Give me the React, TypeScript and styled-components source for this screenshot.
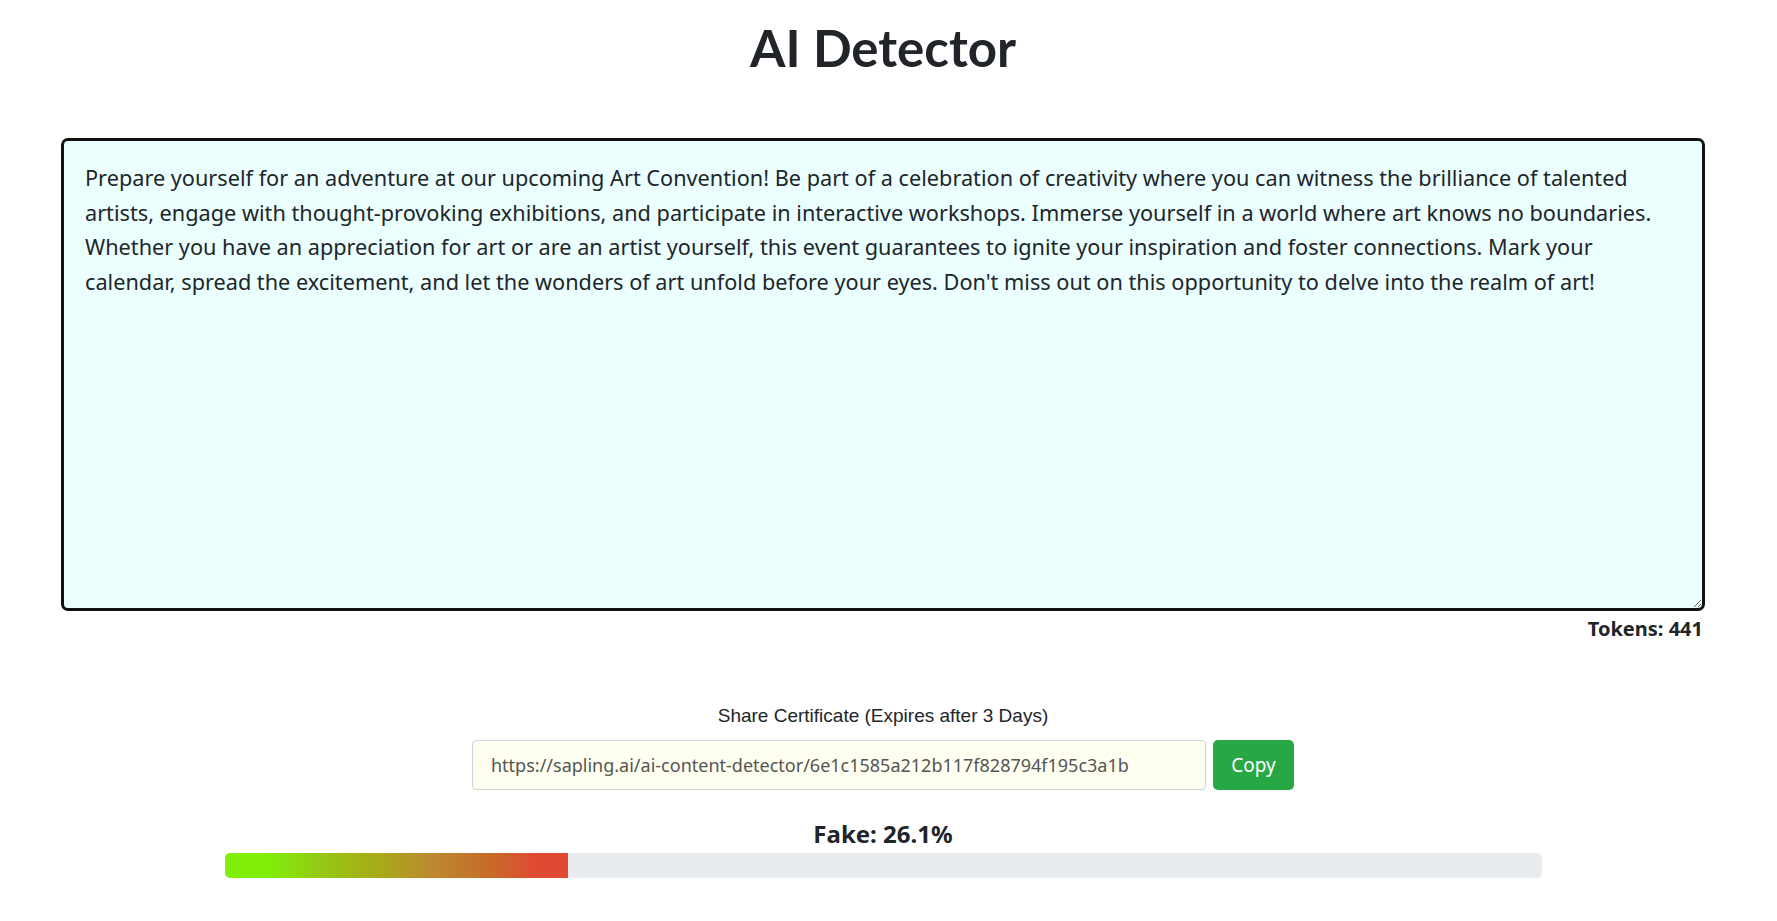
import styled, { createGlobalStyle } from 'styled-components'

const GlobalStyle = createGlobalStyle`
  html, body {
    margin: 0;
    padding: 0;
    background: #ffffff;
    color: #212529;
    font-family: "Noto Sans", "Open Sans", sans-serif;
  }
`

const Page = styled.div`
  display: flex;
  flex-direction: column;
  align-items: center;
  padding: 17px 72px 40px 61px;
`

const Title = styled.h1`
  margin: 0 0 60px;
  font-family: Lato, "Noto Sans", sans-serif;
  font-weight: 700;
  font-size: 51px;
  line-height: 1.2;
  color: #212529;
`

const EditorBlock = styled.div`
  width: 100%;
  display: flex;
  flex-direction: column;
  align-items: flex-end;
`

const TextBox = styled.textarea`
  box-sizing: border-box;
  width: 100%;
  height: 473px;
  padding: 20px 21px;
  border: 3px solid #111;
  border-radius: 7px;
  background: #ebffff;
  color: #212529;
  font-family: "Noto Sans", "Open Sans", sans-serif;
  font-size: 21.7px;
  line-height: 34.6px;
  outline: none;
`

const Tokens = styled.div`
  margin: 6px 2px 0 0;
  font-weight: 700;
  font-size: 20px;
  line-height: 24px;
`

const ShareSection = styled.section`
  margin-top: 64px;
  display: flex;
  flex-direction: column;
  align-items: center;
  gap: 13px;
`

const ShareLabel = styled.div`
  font-family: "Liberation Sans", Arial, sans-serif;
  font-size: 19px;
  line-height: 22px;
`

const ShareRow = styled.div`
  display: flex;
  gap: 7px;
`

const UrlInput = styled.input`
  box-sizing: border-box;
  width: 734px;
  height: 50px;
  padding: 0 18px;
  border: 1px solid #cfd4d8;
  border-radius: 4px;
  background: #fefff0;
  color: #555;
  font-family: "Noto Sans", "Open Sans", sans-serif;
  font-size: 18px;
  outline: none;
`

const CopyButton = styled.button`
  box-sizing: border-box;
  width: 81px;
  height: 50px;
  border: none;
  border-radius: 5px;
  background: #28a745;
  color: #fff;
  font-family: "Noto Sans", "Open Sans", sans-serif;
  font-size: 19px;
  cursor: pointer;
`

const Result = styled.section`
  margin-top: 29px;
  display: flex;
  flex-direction: column;
  align-items: center;
  gap: 4px;
`

const Score = styled.div`
  font-weight: 700;
  font-size: 24px;
  line-height: 30px;
`

const Track = styled.div`
  width: 1317px;
  height: 25px;
  border-radius: 5px;
  background: #e9ecef;
  overflow: hidden;
`

const Fill = styled.div`
  height: 100%;
  background: linear-gradient(
    to right,
    #80f00a 0%,
    #80f00a 12%,
    #96c814 28%,
    #a8aa18 45%,
    #bc8a30 60%,
    #c86a28 78%,
    #e04a33 90%,
    #e04a33 100%
  );
`

const essay =
  "Prepare yourself for an adventure at our upcoming Art Convention! Be part of a celebration of creativity where you can witness the brilliance of talented artists, engage with thought-provoking exhibitions, and participate in interactive workshops. Immerse yourself in a world where art knows no boundaries. Whether you have an appreciation for art or are an artist yourself, this event guarantees to ignite your inspiration and foster connections. Mark your calendar, spread the excitement, and let the wonders of art unfold before your eyes. Don't miss out on this opportunity to delve into the realm of art!"

const fake = 26.1

function App() {
  return (
    <>
      <GlobalStyle />
      <Page>
        <Title>AI Detector</Title>

        <EditorBlock>
          <TextBox defaultValue={essay} spellCheck={false} />
          <Tokens>Tokens: 441</Tokens>
        </EditorBlock>

        <ShareSection>
          <ShareLabel>Share Certificate (Expires after 3 Days)</ShareLabel>
          <ShareRow>
            <UrlInput
              readOnly
              value="https://sapling.ai/ai-content-detector/6e1c1585a212b117f828794f195c3a1b"
            />
            <CopyButton>Copy</CopyButton>
          </ShareRow>
        </ShareSection>

        <Result>
          <Score>Fake: {fake}%</Score>
          <Track>
            <Fill style={{ width: `${fake}%` }} />
          </Track>
        </Result>
      </Page>
    </>
  )
}

export default App
